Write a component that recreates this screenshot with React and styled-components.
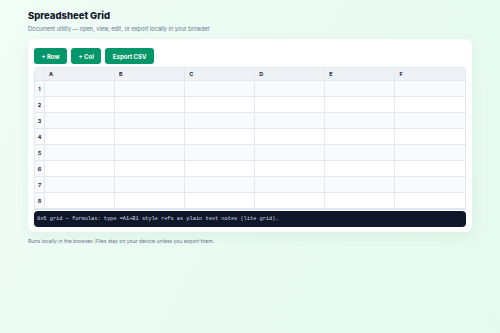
import React from "react";
import styled, { createGlobalStyle } from "styled-components";

const GlobalStyle = createGlobalStyle`
  html, body {
    margin: 0;
    padding: 0;
  }
  body {
    min-height: 100vh;
    background: linear-gradient(120deg, #f1fdf7 0%, #e9fbf1 60%, #e6faef 100%);
    font-family: Inter, "Noto Sans", sans-serif;
    color: #0f172a;
  }
`;

const Page = styled.div`
  padding: 10px 28px 20px;
`;

const Title = styled.h1`
  margin: 0;
  font-size: 9.5px;
  line-height: 12px;
  font-weight: 800;
  color: #0f172a;
`;

const Subtitle = styled.p`
  margin: 3px 0 0;
  font-size: 5.6px;
  line-height: 8px;
  color: #64748b;
`;

const Card = styled.div`
  margin-top: 6px;
  background: #ffffff;
  border-radius: 6px;
  padding: 9px 6px 5px;
  box-shadow: 0 4px 14px rgba(16, 120, 80, 0.08);
`;

const Toolbar = styled.div`
  display: flex;
  gap: 4px;
  margin-bottom: 3px;
`;

const Button = styled.button`
  height: 16px;
  padding: 0 7.5px;
  border: none;
  border-radius: 3px;
  background: #059669;
  color: #ffffff;
  font-family: Inter, "Noto Sans", sans-serif;
  font-size: 6px;
  font-weight: 700;
  cursor: pointer;
`;

const TableWrap = styled.div`
  border: 1px solid #e2e8f0;
  border-radius: 3px 3px 0 0;
  overflow: hidden;
`;

const Table = styled.table`
  width: 100%;
  border-collapse: collapse;
  table-layout: fixed;
`;

const HeadCell = styled.th`
  height: 12px;
  padding: 0 0 0 4px;
  background: #eef2f7;
  border-right: 1px solid #e2e8f0;
  border-bottom: 1px solid #e2e8f0;
  font-size: 5.4px;
  font-weight: 700;
  color: #1e293b;
  text-align: left;
  &:last-child {
    border-right: none;
  }
`;

const Corner = styled(HeadCell)`
  width: 9px;
  padding: 0;
`;

const Row = styled.tr`
  background: ${({ $odd }) => ($odd ? "#f8fafc" : "#ffffff")};
`;

const RowNum = styled.td`
  height: 15px;
  padding: 0;
  background: #f8fafc;
  border-right: 1px solid #e2e8f0;
  border-bottom: 1px solid #e2e8f0;
  font-size: 5.4px;
  font-weight: 700;
  color: #1e293b;
  text-align: center;
`;

const Cell = styled.td`
  height: 15px;
  padding: 0;
  border-right: 1px solid #e2e8f0;
  border-bottom: 1px solid #e2e8f0;
  &:last-child {
    border-right: none;
  }
`;

const Status = styled.div`
  margin-top: 1px;
  height: 16px;
  display: flex;
  align-items: center;
  padding: 0 3px;
  background: #0f172a;
  border-radius: 4px;
  font-family: "Liberation Mono", "DejaVu Sans Mono", monospace;
  font-size: 5.3px;
  color: #d5dde8;
  white-space: nowrap;
`;

const Footer = styled.p`
  margin: 5px 0 0;
  font-size: 5.1px;
  line-height: 8px;
  color: #64748b;
`;

const cols = ["A", "B", "C", "D", "E", "F"];
const rows = [1, 2, 3, 4, 5, 6, 7, 8];

export default function App() {
  return (
    <>
      <GlobalStyle />
      <Page>
        <Title>Spreadsheet Grid</Title>
        <Subtitle>Document utility — open, view, edit, or export locally in your browser</Subtitle>
        <Card>
          <Toolbar>
            <Button>+ Row</Button>
            <Button>+ Col</Button>
            <Button>Export CSV</Button>
          </Toolbar>
          <TableWrap>
            <Table>
              <thead>
                <tr>
                  <Corner />
                  {cols.map((c) => (
                    <HeadCell key={c}>{c}</HeadCell>
                  ))}
                </tr>
              </thead>
              <tbody>
                {rows.map((r) => (
                  <Row key={r} $odd={r % 2 === 1}>
                    <RowNum>{r}</RowNum>
                    {cols.map((c) => (
                      <Cell key={c} />
                    ))}
                  </Row>
                ))}
              </tbody>
            </Table>
          </TableWrap>
          <Status>8x6 grid — formulas: type =A1+B1 style refs as plain text notes (lite grid).</Status>
        </Card>
        <Footer>Runs locally in the browser. Files stay on your device unless you export them.</Footer>
      </Page>
    </>
  );
}
